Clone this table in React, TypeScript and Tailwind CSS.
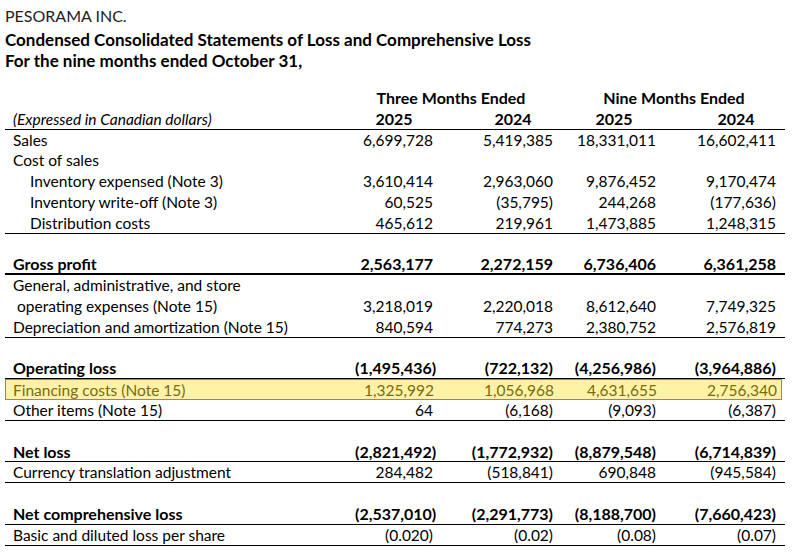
import React from "react";

type Border = "none" | "thin" | "thick";

type RowData = {
  label: string;
  values?: string[];
  bold?: boolean;
  indent?: "none" | "space" | "deep";
  border?: Border;
  highlight?: boolean;
};

const rows: RowData[] = [
  { label: "Sales", values: ["6,699,728", "5,419,385", "18,331,011", "16,602,411"] },
  { label: "Cost of sales" },
  { label: "Inventory expensed (Note 3)", indent: "deep", values: ["3,610,414", "2,963,060", "9,876,452", "9,170,474"] },
  { label: "Inventory write-off (Note 3)", indent: "deep", values: ["60,525", "(35,795)", "244,268", "(177,636)"] },
  { label: "Distribution costs", indent: "deep", values: ["465,612", "219,961", "1,473,885", "1,248,315"], border: "thin" },
  { label: "" },
  { label: "Gross profit", bold: true, values: ["2,563,177", "2,272,159", "6,736,406", "6,361,258"], border: "thick" },
  { label: "General, administrative, and store" },
  { label: "operating expenses (Note 15)", indent: "space", values: ["3,218,019", "2,220,018", "8,612,640", "7,749,325"] },
  { label: "Depreciation and amortization (Note 15)", values: ["840,594", "774,273", "2,380,752", "2,576,819"], border: "thin" },
  { label: "" },
  { label: "Operating loss", bold: true, values: ["(1,495,436)", "(722,132)", "(4,256,986)", "(3,964,886)"], border: "thin" },
  { label: "Financing costs (Note 15)", highlight: true, values: ["1,325,992", "1,056,968", "4,631,655", "2,756,340"] },
  { label: "Other items (Note 15)", values: ["64", "(6,168)", "(9,093)", "(6,387)"], border: "thin" },
  { label: "" },
  { label: "Net loss", bold: true, values: ["(2,821,492)", "(1,772,932)", "(8,879,548)", "(6,714,839)"], border: "thin" },
  { label: "Currency translation adjustment", values: ["284,482", "(518,841)", "690,848", "(945,584)"], border: "thin" },
  { label: "" },
  { label: "Net comprehensive loss", bold: true, values: ["(2,537,010)", "(2,291,773)", "(8,188,700)", "(7,660,423)"], border: "thin" },
  { label: "Basic and diluted loss per share", values: ["(0.020)", "(0.02)", "(0.08)", "(0.07)"], border: "thin" },
];

// label | col1 | col2 | col3 | col4 | trailing
const grid = "grid grid-cols-[350px_78px_120px_103px_120px_9px]";

function Row({ r }: { r: RowData }) {
  const border =
    r.border === "thick"
      ? "border-b-2 border-black"
      : r.border === "thin"
        ? "border-b border-black"
        : "";
  const pad = r.indent === "deep" ? "pl-[25px]" : r.indent === "space" ? "pl-[12px]" : "pl-[8px]";
  const tone = r.highlight
    ? "bg-[#fdf2a6] border border-[#d9685b] text-[#7d6a12] mr-[3px]"
    : "text-black";
  return (
    <div
      className={`${grid} h-[20.8px] items-center ${border} ${tone} ${r.bold ? "font-bold text-[16px]" : "text-[15.5px]"}`}
    >
      <div className={`${pad} whitespace-nowrap ${r.highlight ? "-ml-px" : ""}`}>{r.label}</div>
      {[0, 1, 2, 3].map((i) => (
        <div key={i} className="text-right whitespace-nowrap">
          {r.values ? r.values[i] : ""}
        </div>
      ))}
      <div />
    </div>
  );
}

export default function App() {
  return (
    <div
      className="w-[797px] h-[559px] bg-white text-black text-[16px] leading-[20.8px] overflow-hidden"
      style={{ fontFamily: "Lato, 'Open Sans', sans-serif" }}
    >
      <div className="pl-[5px] pt-[6px]">
        <div className="leading-[20px] text-[16px] text-[#222]">PESORAMA INC.</div>
        <div className="font-bold text-[17px] leading-[21px] mt-[3px]">
          Condensed Consolidated Statements of Loss and Comprehensive Loss
        </div>
        <div className="font-bold text-[17px] leading-[21px]">For the nine months ended October 31,</div>
      </div>

      <div className="w-[785px] pl-[5px] mt-[17px]">
        <div className={`${grid} h-[20.8px] items-center font-bold`}>
          <div />
          <div className="col-span-2 text-center whitespace-nowrap">
            <span className="inline-block -ml-[6px]">Three Months Ended</span>
          </div>
          <div className="col-span-2 pl-[19px] text-center whitespace-nowrap">Nine Months Ended</div>
          <div />
        </div>
        <div className={`${grid} h-[20.8px] items-center border-b border-black`}>
          <div className="pl-[8px] italic text-[15.5px] whitespace-nowrap">(Expressed in Canadian dollars)</div>
          <div className="text-center font-bold">2025</div>
          <div className="pl-[40px] text-center font-bold">2024</div>
          <div className="pl-[19px] text-center font-bold">2025</div>
          <div className="pl-[40px] text-center font-bold">2024</div>
          <div />
        </div>
        {rows.map((r, i) => (
          <Row key={i} r={r} />
        ))}
      </div>
    </div>
  );
}
